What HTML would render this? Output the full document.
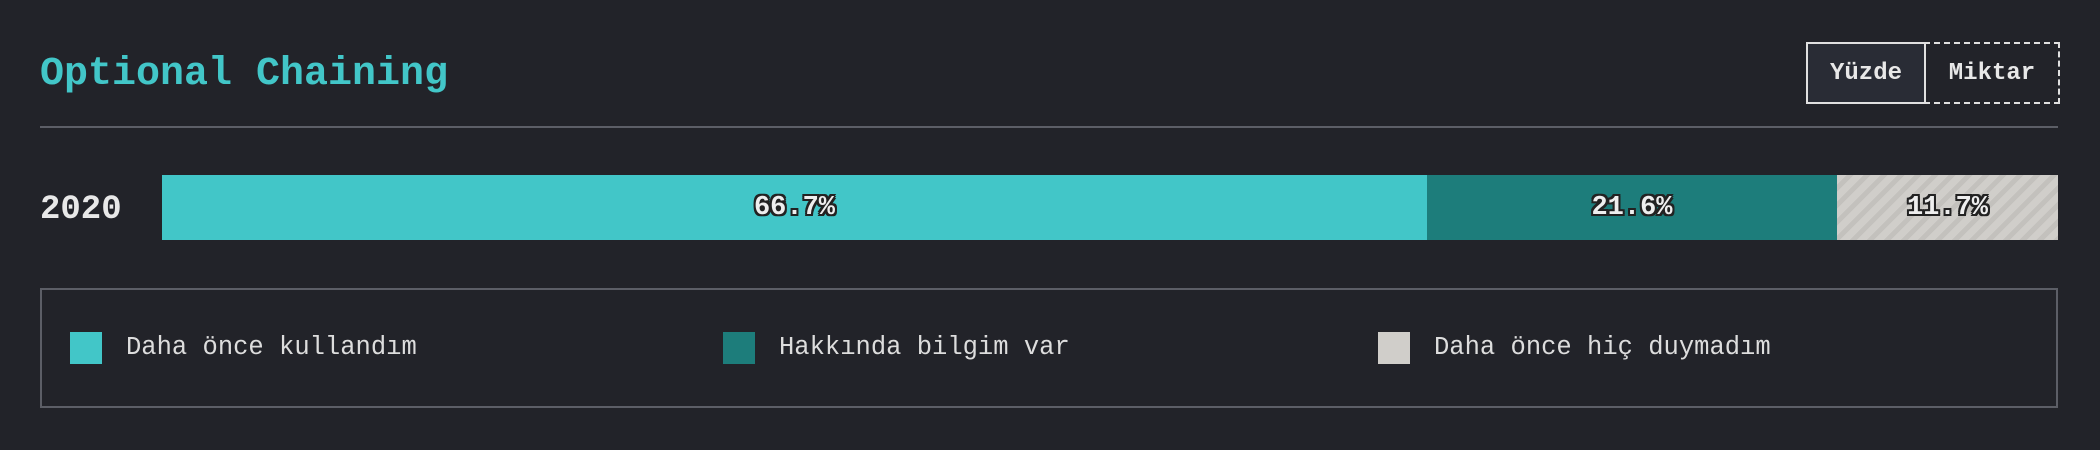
<!DOCTYPE html>
<html><head><meta charset="utf-8"><style>
*{margin:0;padding:0;box-sizing:border-box}
body{width:2100px;height:450px;background:#222329;position:relative;overflow:hidden;font-family:"Liberation Mono","DejaVu Sans Mono",monospace;color:#e8e8e8}
.title{position:absolute;left:40px;top:55px;font-size:40px;font-weight:bold;color:#42c6c8;line-height:1}
.line{position:absolute;left:40px;width:2018px;top:126px;height:2px;background:#5c5e66}
.btn{position:absolute;top:42px;height:62px;font-size:24px;font-weight:bold;display:flex;align-items:center;justify-content:center;color:#e8e8e8}
.b1{left:1806px;width:120px;border:2px solid #e0e0e0;background:#292c35}
.b2{left:1924px;width:136px;border:2px dashed #e0e0e0;border-left:2px solid #e0e0e0}
.year{position:absolute;left:40px;top:192px;font-size:34px;font-weight:bold;line-height:36px}
.bar{position:absolute;top:175px;height:65px;display:flex;align-items:center;justify-content:center;font-size:27px;font-weight:bold;color:#eee;
text-shadow:-2px -2px 0 #222,2px -2px 0 #222,-2px 2px 0 #222,2px 2px 0 #222,0 2px 0 #222,0 -2px 0 #222,2px 0 0 #222,-2px 0 0 #222}
.s1{left:162px;width:1265px;background:#42c6c8}
.s2{left:1427px;width:410px;background:#1d7d7b}
.s3{left:1837px;width:221px;background:repeating-linear-gradient(135deg,#d0ceca 0 7px,#c3c1bd 7px 12px)}
.legend{position:absolute;left:40px;top:288px;width:2018px;height:120px;border:2px solid #5c5e66}
.sw{position:absolute;top:332px;width:32px;height:32px}
.lt{position:absolute;top:332px;line-height:32px;font-size:25.5px;color:#ddd}
</style></head><body>
<div class="title">Optional Chaining</div>
<div class="btn b1">Yüzde</div><div class="btn b2">Miktar</div>
<div class="line"></div>
<div class="year">2020</div>
<div class="bar s1">66.7%</div>
<div class="bar s2">21.6%</div>
<div class="bar s3">11.7%</div>
<div class="legend"></div>
<div class="sw" style="left:70px;background:#42c6c8"></div><div class="lt" style="left:126px">Daha önce kullandım</div>
<div class="sw" style="left:723px;background:#1d7d7b"></div><div class="lt" style="left:779px">Hakkında bilgim var</div>
<div class="sw" style="left:1378px;background:#d0ceca"></div><div class="lt" style="left:1434px">Daha önce hiç duymadım</div>
</body></html>
